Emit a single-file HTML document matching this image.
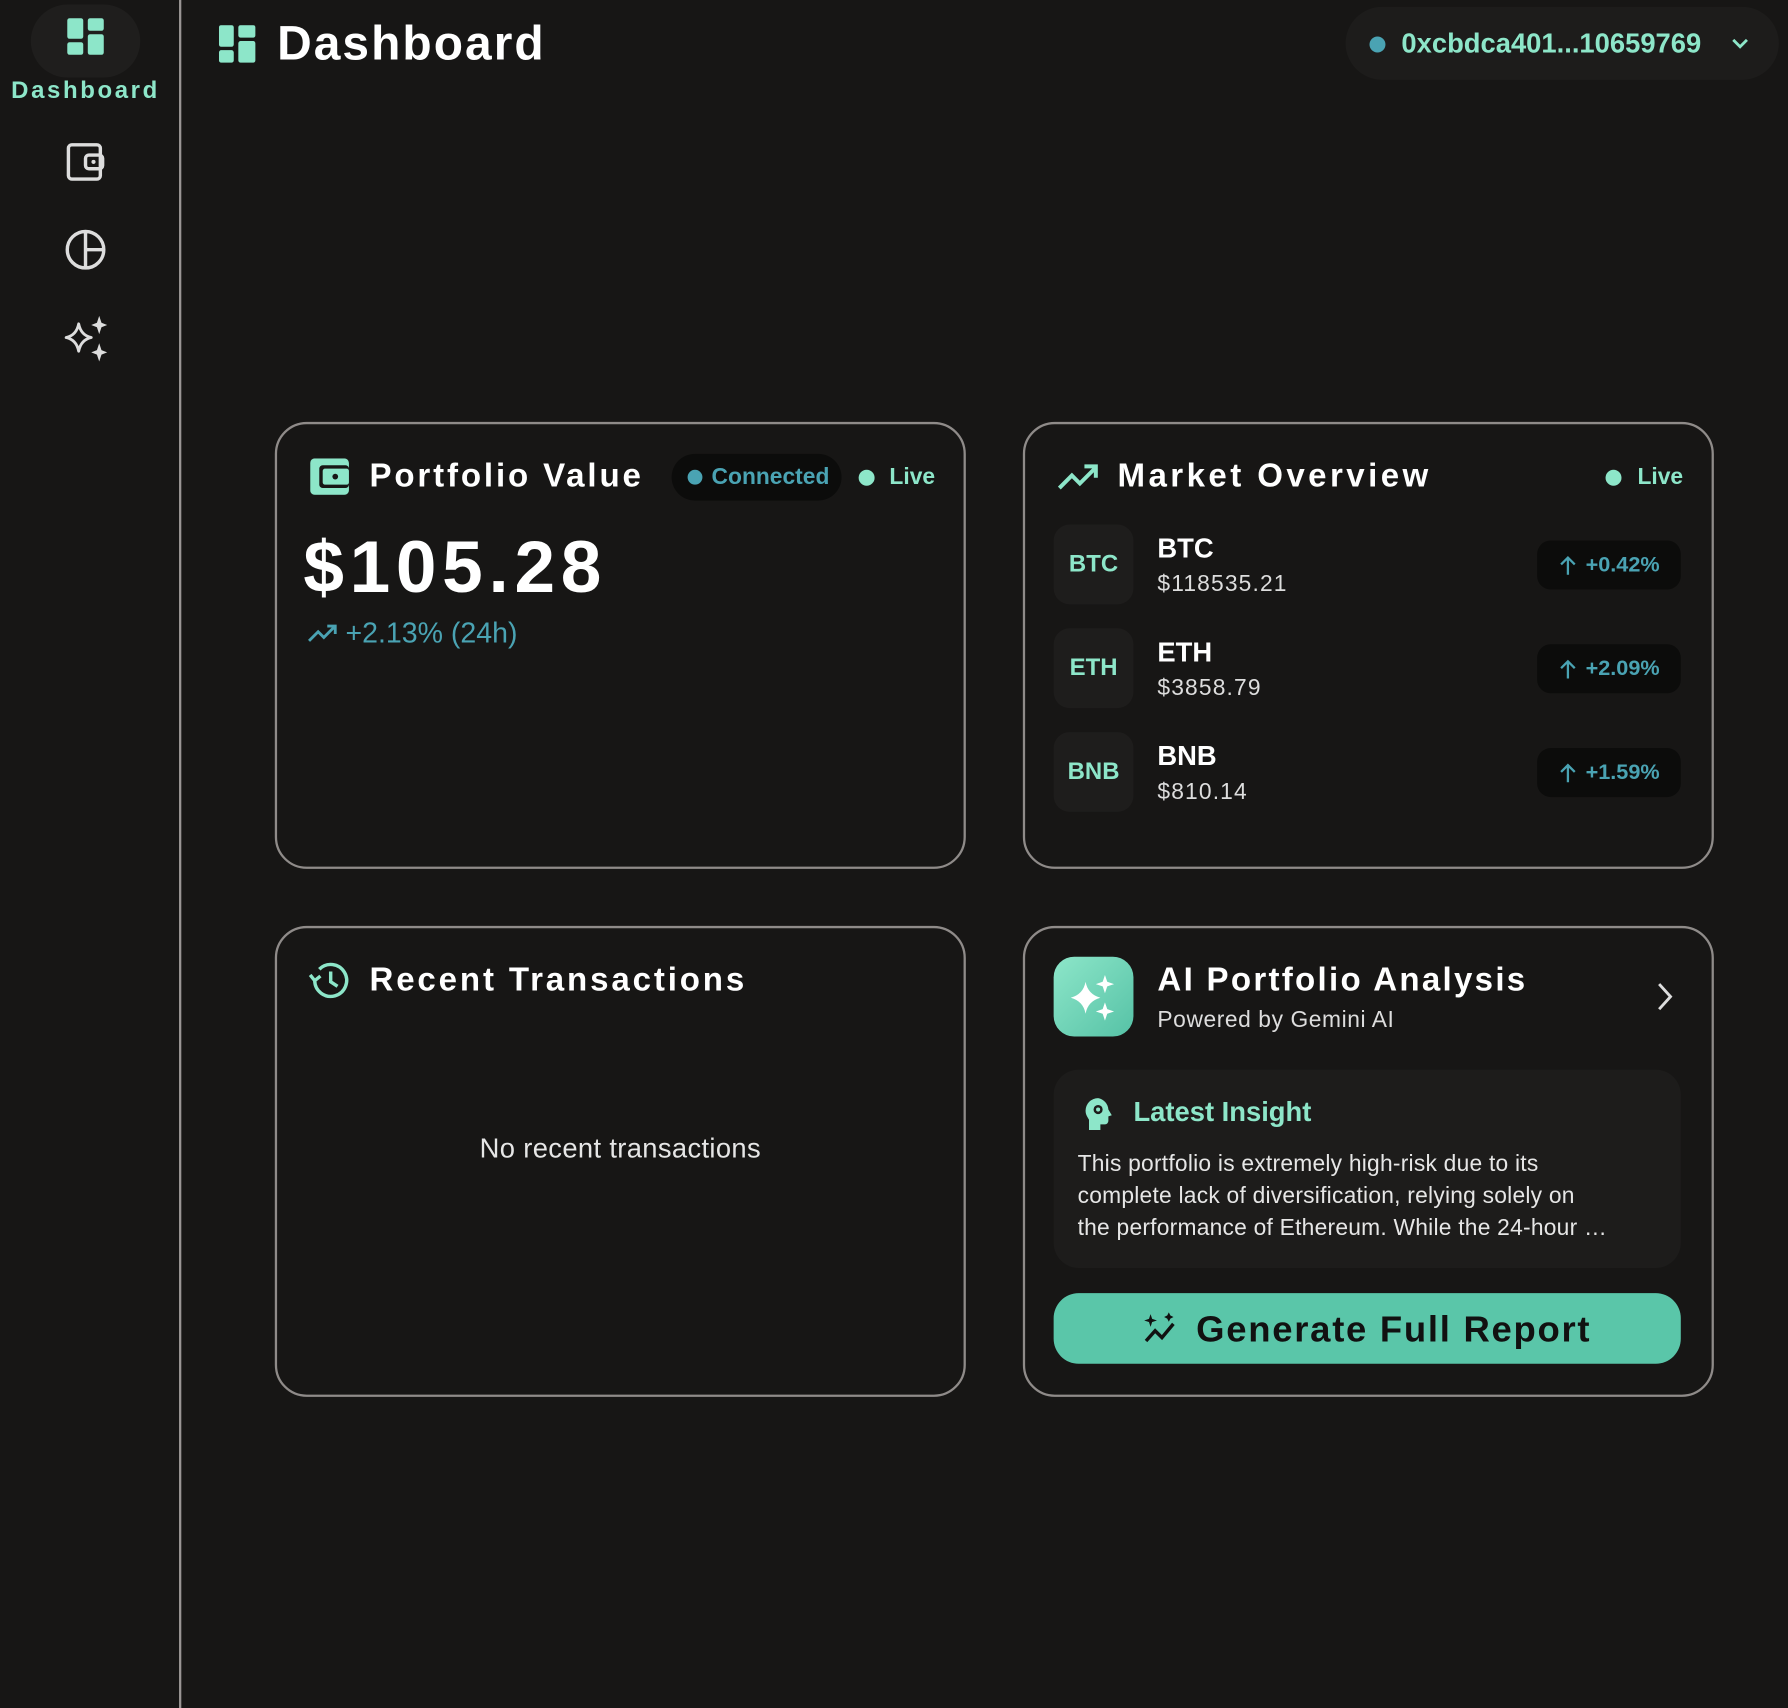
<!DOCTYPE html>
<html><head><meta charset="utf-8">
<style>
html,body{margin:0;padding:0;background:#171615;overflow:hidden;}
body{width:1788px;height:1708px;}
#w{position:absolute;left:0;top:0;width:1568px;height:1498px;transform:scale(1.1403);transform-origin:0 0;font-family:"Liberation Sans",sans-serif;color:#fff;}
.a{position:absolute;}
.side{left:0;top:0;width:157px;height:1498px;border-right:2px solid #9a9594;}
.card{position:absolute;border:2px solid #8f8b89;border-radius:28px;box-sizing:border-box;}
.h{font-weight:bold;font-size:29px;white-space:nowrap;line-height:1;letter-spacing:2.5px;}
.vc{transform:translateY(-50%);}
.badge{position:absolute;left:924px;width:70px;height:70px;background:#1e1d1c;border-radius:14px;color:#8de6c9;font-weight:bold;font-size:21px;display:flex;align-items:center;justify-content:center;}
.nm{position:absolute;left:1015px;font-weight:bold;font-size:24px;}
.pr{position:absolute;left:1015px;font-size:20px;color:#ddd;letter-spacing:1px;}
.chg{position:absolute;left:1348px;width:126px;height:43px;background:#0c0c0b;border-radius:12px;color:#4aa3b3;font-weight:bold;font-size:19px;display:flex;align-items:center;justify-content:center;gap:8px;}
</style></head><body><div id="w">
<div class="a side"></div>
<div class="a" style="left:27px;top:4px;width:96px;height:64px;background:#1f1e1d;border-radius:32px;"></div>
<svg class="a" style="left:58px;top:15px" width="34" height="34" viewBox="0 0 34 34" fill="#8de6c9"><rect x="1" y="1" width="14" height="18" rx="2"/><rect x="1" y="22" width="14" height="11" rx="2"/><rect x="19" y="1" width="14" height="11" rx="2"/><rect x="19" y="15" width="14" height="18" rx="2"/></svg>
<div class="a" style="left:0;width:150px;top:68px;text-align:center;color:#8de6c9;font-weight:bold;font-size:21px;letter-spacing:2.3px;">Dashboard</div>
<svg class="a" style="left:57px;top:124px" width="36" height="36" viewBox="0 0 36 36" fill="none" stroke="#ddd" stroke-width="3"><rect x="3" y="3" width="28" height="30" rx="3"/><rect x="18" y="12" width="15" height="12" rx="3"/><circle cx="25" cy="18" r="1.8" fill="#ddd" stroke="none"/></svg>
<svg class="a" style="left:56px;top:200px" width="38" height="38" viewBox="0 0 38 38" fill="none" stroke="#ddd" stroke-width="3"><circle cx="19" cy="19" r="16"/><path d="M19 3v32M19 19h16"/></svg>
<svg class="a" style="left:54px;top:276px" width="42" height="42" viewBox="0 0 42 42" fill="none" stroke="#ddd" stroke-width="2.5"><path d="M15 8 Q17 18 26 20 Q17 22 15 32 Q13 22 4 20 Q13 18 15 8Z" stroke-linejoin="round"/><path d="M33 1 L35 7 L40 9 L35 11 L33 17 L31 11 L26 9 L31 7Z" fill="#ddd" stroke="none"/><path d="M33 25 L35 31 L40 33 L35 35 L33 41 L31 35 L26 33 L31 31Z" fill="#ddd" stroke="none"/></svg>

<svg class="a" style="left:192px;top:22px" width="32" height="33" viewBox="0 0 32 33" fill="#8de6c9"><rect x="0" y="0" width="13" height="19" rx="2"/><rect x="0" y="22" width="13" height="11" rx="2"/><rect x="17" y="0" width="15" height="11" rx="2"/><rect x="17" y="14" width="15" height="19" rx="2"/></svg>
<div class="a h vc" style="left:243px;top:38px;font-size:42px;letter-spacing:1.8px;">Dashboard</div>

<div class="a" style="left:1180px;top:6px;width:380px;height:64px;background:#1d1c1b;border-radius:32px;"></div>
<div class="a" style="left:1201px;top:32px;width:14px;height:14px;border-radius:50%;background:#4aa3b3;"></div>
<div class="a vc" style="left:1229px;top:39px;color:#8de6c9;font-weight:bold;font-size:24px;">0xcbdca401...10659769</div>
<svg class="a" style="left:1517px;top:31px" width="18" height="14" viewBox="0 0 18 14" fill="none" stroke="#8de6c9" stroke-width="2.5"><path d="M3 4l6 6 6-6"/></svg>

<div class="card" style="left:241px;top:370px;width:606px;height:392px;"></div>
<div class="card" style="left:897px;top:370px;width:606px;height:392px;"></div>
<div class="card" style="left:241px;top:812px;width:606px;height:413px;"></div>
<div class="card" style="left:897px;top:812px;width:606px;height:413px;"></div>

<svg class="a" style="left:272px;top:402px" width="36" height="32" viewBox="0 0 36 32"><rect x="0" y="0" width="34" height="32" rx="4" fill="#8de6c9"/><rect x="8" y="6" width="26" height="20" rx="3" fill="#171615"/><rect x="11" y="9" width="23" height="14" rx="2" fill="#8de6c9"/><circle cx="22" cy="16" r="2.5" fill="#171615"/></svg>
<div class="a h vc" style="left:324px;top:418px;">Portfolio Value</div>
<div class="a" style="left:589px;top:398px;width:149px;height:41px;background:#0c0c0b;border-radius:21px;"></div>
<div class="a" style="left:603px;top:412px;width:13px;height:13px;border-radius:50%;background:#4aa3b3;"></div>
<div class="a vc" style="left:624px;top:419px;color:#4aa3b3;font-weight:bold;font-size:20px;">Connected</div>
<div class="a" style="left:753px;top:412px;width:14px;height:14px;border-radius:50%;background:#8de6c9;"></div>
<div class="a vc" style="left:780px;top:419px;color:#8de6c9;font-weight:bold;font-size:20px;">Live</div>
<div class="a vc" style="left:266px;top:497px;font-weight:900;font-size:64px;letter-spacing:5px;">$105.28</div>
<svg class="a" style="left:270px;top:545px" width="26" height="20" viewBox="0 0 26 20" fill="none" stroke="#4aa3b3" stroke-width="2.5"><path d="M1 17l8-8 5 5 10-10M17 4h7v7"/></svg>
<div class="a vc" style="left:303px;top:556px;color:#4aa3b3;font-size:25px;">+2.13% (24h)</div>

<svg class="a" style="left:927px;top:405px" width="37" height="26" viewBox="0 0 37 26" fill="none" stroke="#8de6c9" stroke-width="3.5"><path d="M2 23l11-11 7 7 14-14M24 4h10v10"/></svg>
<div class="a h vc" style="left:980px;top:418px;letter-spacing:3px;">Market Overview</div>
<div class="a" style="left:1408px;top:412px;width:14px;height:14px;border-radius:50%;background:#8de6c9;"></div>
<div class="a vc" style="left:1436px;top:419px;color:#8de6c9;font-weight:bold;font-size:20px;">Live</div>

<div class="badge" style="top:460px;">BTC</div>
<div class="nm vc" style="top:482px;">BTC</div>
<div class="pr vc" style="top:513px;">$118535.21</div>
<div class="chg" style="top:474px;"><svg width="16" height="18" viewBox="0 0 16 18" fill="none" stroke="#4aa3b3" stroke-width="2"><path d="M8 17V2M2 8l6-6 6 6"/></svg>+0.42%</div>

<div class="badge" style="top:551px;">ETH</div>
<div class="nm vc" style="top:573px;">ETH</div>
<div class="pr vc" style="top:604px;">$3858.79</div>
<div class="chg" style="top:565px;"><svg width="16" height="18" viewBox="0 0 16 18" fill="none" stroke="#4aa3b3" stroke-width="2"><path d="M8 17V2M2 8l6-6 6 6"/></svg>+2.09%</div>

<div class="badge" style="top:642px;">BNB</div>
<div class="nm vc" style="top:664px;">BNB</div>
<div class="pr vc" style="top:695px;">$810.14</div>
<div class="chg" style="top:656px;"><svg width="16" height="18" viewBox="0 0 16 18" fill="none" stroke="#4aa3b3" stroke-width="2"><path d="M8 17V2M2 8l6-6 6 6"/></svg>+1.59%</div>

<svg class="a" style="left:270px;top:842px" width="38" height="36" viewBox="0 0 38 36" fill="none" stroke="#8de6c9" stroke-width="3"><path d="M6 18a14 14 0 1 0 4-10"/><path d="M2 13l4 5 5-4"/><path d="M20 10v9l6 4"/></svg>
<div class="a h vc" style="left:324px;top:860px;">Recent Transactions</div>
<div class="a vc" style="left:241px;width:606px;top:1008px;text-align:center;color:#e6e6e6;font-size:24px;letter-spacing:0.3px;">No recent transactions</div>

<div class="a" style="left:924px;top:839px;width:70px;height:70px;border-radius:18px;background:linear-gradient(135deg,#8de6c9,#56c2a6);"></div>
<svg class="a" style="left:936px;top:852px" width="46" height="46" viewBox="0 0 46 46" fill="#fff"><path d="M16 9 Q18 20 29 23 Q18 26 16 37 Q14 26 3 23 Q14 20 16 9Z"/><path d="M33 3 L35 9 L41 11 L35 13 L33 19 L31 13 L25 11 L31 9Z"/><path d="M33 27 L35 33 L41 35 L35 37 L33 43 L31 37 L25 35 L31 33Z"/></svg>
<div class="a h vc" style="left:1015px;top:860px;letter-spacing:2px;">AI Portfolio Analysis</div>
<div class="a vc" style="left:1015px;top:895px;color:#ddd;font-size:20px;letter-spacing:0.5px;">Powered by Gemini AI</div>
<svg class="a" style="left:1450px;top:860px" width="20" height="28" viewBox="0 0 20 28" fill="none" stroke="#ddd" stroke-width="2.5"><path d="M5 3l10 11-10 11"/></svg>

<div class="a" style="left:924px;top:938px;width:550px;height:174px;background:#1d1c1b;border-radius:22px;"></div>
<svg class="a" style="left:949px;top:962px" width="28" height="30" viewBox="0 0 28 30"><path d="M14 1a11 11 0 0 0-11 11c0 4 2 6 3 8v9h10v-5h4a3 3 0 0 0 3-3v-4l3-1-3-5A11 11 0 0 0 14 1z" fill="#8de6c9"/><circle cx="14" cy="11" r="4" fill="#1d1c1b"/><circle cx="14" cy="11" r="1.8" fill="#8de6c9"/></svg>
<div class="a vc" style="left:994px;top:976px;color:#8de6c9;font-weight:bold;font-size:24px;">Latest Insight</div>
<div class="a" style="left:945px;top:1007px;width:520px;color:#e6e6e6;font-size:20px;line-height:28px;letter-spacing:0.2px;">This portfolio is extremely high-risk due to its<br>complete lack of diversification, relying solely on<br>the performance of Ethereum. While the 24-hour …</div>

<div class="a" style="left:924px;top:1134px;width:550px;height:62px;background:#5ac6a9;border-radius:22px;"></div>
<svg class="a" style="left:1003px;top:1151px" width="32" height="28" viewBox="0 0 32 28" fill="none" stroke="#111" stroke-width="3"><path d="M2 25l8-9 6 6 10-12"/><path d="M6 3l1 3 3 1-3 1-1 3-1-3-3-1 3-1z" fill="#111" stroke-width="1"/><path d="M22 1l1 2 2 1-2 1-1 2-1-2-2-1 2-1z" fill="#111" stroke-width="1"/></svg>
<div class="a vc" style="left:1049px;top:1166px;color:#111;font-weight:bold;font-size:32px;letter-spacing:1.5px;">Generate Full Report</div>
</div></body></html>
